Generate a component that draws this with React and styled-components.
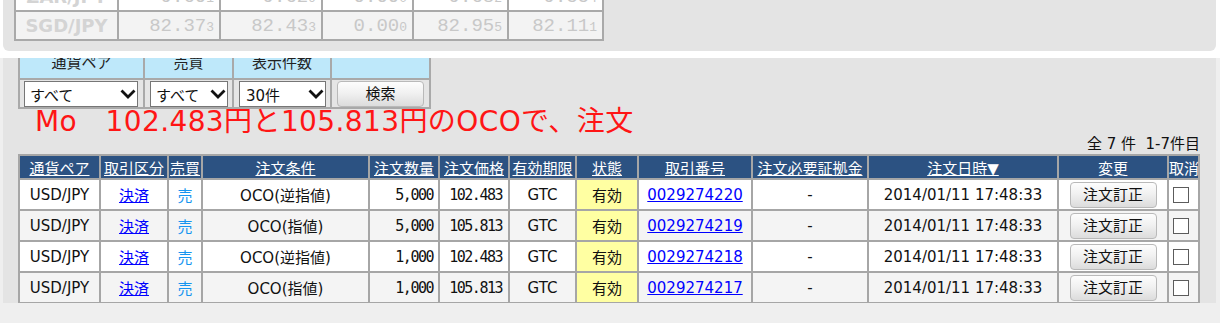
import React from "react";
import styled, { createGlobalStyle } from "styled-components";

const GlobalStyle = createGlobalStyle`
  * { box-sizing: border-box; }
  body {
    margin: 0;
    background: #fff;
    font-family: "DejaVu Sans", "Noto Sans CJK JP", sans-serif;
    color: #111;
  }
`;

const Page = styled.div`
  width: 1220px;
  height: 323px;
  overflow: hidden;
  background: #fff;
`;

// top rate board (scrolled so only the last row shows)
const RatePanel = styled.div`
  margin: 0 4px 0 3px;
  height: 51px;
  background: #e4e4e4;
  border-radius: 0 0 6px 6px;
  padding-left: 11px;
  overflow: hidden;
`;

const RateTable = styled.table`
  margin-top: -19px;
  border-spacing: 2px;
  background: #a9a9a9;
  table-layout: fixed;
  width: 588px;
`;

const RateRow = styled.tr`
  height: 27px;
  background: ${(p) => (p.$shade ? "#f3f3f3" : "#fff")};
`;

const PairCell = styled.td`
  padding: 0;
  text-align: center;
  font-weight: bold;
  font-size: 18px;
  color: #d4d4d4;
`;

const RateCell = styled.td`
  padding: 0 5px 0 0;
  text-align: right;
  font-family: "Liberation Mono", monospace;
  font-size: 19px;
  color: #c8c8c8;
  small {
    font-size: 13px;
  }
`;

const Frame = styled.div`
  margin-top: 7px;
  height: 265px;
  background: #efefef;
  padding: 0 4px 0 3px;
`;

const Panel = styled.div`
  height: 245px;
  background: #e4e4e4;
  overflow: hidden;
  padding-left: 15px;
`;

const Scroller = styled.div`
  margin-top: -6px;
`;

const FilterTable = styled.table`
  border-spacing: 2px;
  background: #a9a9a9;
  table-layout: fixed;
  width: 413px;
  font-size: 15px;
`;

const FilterHead = styled.th`
  height: 24px;
  padding: 1px 0 0;
  line-height: 16px;
  vertical-align: top;
  background: #bee8fa;
  font-weight: normal;
  color: #222;
`;

const FilterCell = styled.td`
  height: 27px;
  padding: 1px 0 0 ${(p) => p.$indent || 5}px;
  background: #e5e5e5;
  vertical-align: top;
`;

const SelectBox = styled.div`
  width: ${(p) => p.$w}px;
  height: 26px;
  background: #fff;
  border: 1px solid #767676;
  display: flex;
  align-items: center;
  justify-content: space-between;
  padding: 0 1px 0 ${(p) => p.$pad || 4}px;
  font-size: 15px;
  color: #111;
`;

const GradButton = styled.button`
  width: ${(p) => p.$w}px;
  height: 26px;
  padding: 0 0 4px;
  border: 1px solid #b9b9b9;
  border-radius: 4px;
  background: linear-gradient(#fdfdfd, #f1f1f1 45%, #dcdcdc);
  font-family: inherit;
  font-size: 15px;
  color: #111;
`;

const Message = styled.div`
  height: 26px;
  line-height: 26px;
  margin-left: 17px;
  font-size: 28px;
  letter-spacing: 0.4px;
  color: #ff1515;
  white-space: nowrap;
`;

const Count = styled.div`
  width: 1182px;
  height: 19px;
  line-height: 19px;
  text-align: right;
  font-size: 15px;
  color: #111;
`;

const OrderTable = styled.table`
  width: 1182px;
  table-layout: fixed;
  border-spacing: 2px;
  background: #a6a6a6;
  font-size: 15px;
`;

const Head = styled.th`
  height: 22px;
  padding: 0;
  background: #2c5282;
  color: #fff;
  font-weight: normal;
  white-space: nowrap;
  a {
    color: #fff;
    text-decoration: underline;
  }
`;

const Row = styled.tr`
  height: 29px;
  background: ${(p) => (p.$shade ? "#f4f4f4" : "#fff")};
`;

const Cell = styled.td`
  padding: 0;
  text-align: center;
  white-space: nowrap;
`;

const NumCell = styled.td`
  padding: 0 ${(p) => p.$pr}px 0 0;
  text-align: right;
  font-family: "DejaVu Sans Mono", monospace;
  font-size: 15px;
  letter-spacing: -1.5px;
`;

const StateCell = styled(Cell)`
  background: #ffffa2;
`;

const Link = styled.a`
  color: #0000ff;
  text-decoration: underline;
`;

const Side = styled.span`
  color: #1595f0;
`;

const CheckCell = styled.td`
  padding: 0 0 0 4px;
`;

const Check = styled.span`
  display: block;
  width: 16px;
  height: 16px;
  border: 1px solid #5c5c5c;
  background: #fff;
`;

const Chevron = () => (
  <svg width="16" height="10" viewBox="0 0 16 10">
    <path d="M1.5 1.5 L8 8 L14.5 1.5" fill="none" stroke="#111" strokeWidth="2.8" />
  </svg>
);

const rates = [
  { pair: "ZAR/JPY", v: [["9.60", "1"], ["9.62", "9"], ["0.00", "0"], ["9.68", "2"], ["9.55", "4"]] },
  { pair: "SGD/JPY", v: [["82.37", "3"], ["82.43", "3"], ["0.00", "0"], ["82.95", "5"], ["82.11", "1"]] },
];

const orders = [
  { cond: "OCO(逆指値)", qty: "5,000", price: "102.483", no: "0029274220" },
  { cond: "OCO(指値)", qty: "5,000", price: "105.813", no: "0029274219" },
  { cond: "OCO(逆指値)", qty: "1,000", price: "102.483", no: "0029274218" },
  { cond: "OCO(指値)", qty: "1,000", price: "105.813", no: "0029274217" },
];

const widths = [79, 66, 32, 165, 68, 68, 65, 60, 112, 114, 188, 108, 29];

export default function App() {
  return (
    <Page>
      <GlobalStyle />
      <RatePanel>
        <RateTable>
          <colgroup>
            {[101, 100, 100, 89, 93, 93].map((w, i) => (
              <col key={i} style={{ width: w }} />
            ))}
          </colgroup>
          <tbody>
            {rates.map((r, i) => (
              <RateRow key={r.pair} $shade={i === 1}>
                <PairCell>{r.pair}</PairCell>
                {r.v.map(([a, b], j) => (
                  <RateCell key={j}>
                    {a}
                    <small>{b}</small>
                  </RateCell>
                ))}
              </RateRow>
            ))}
          </tbody>
        </RateTable>
      </RatePanel>

      <Frame>
        <Panel>
          <Scroller>
            <FilterTable>
              <colgroup>
                <col style={{ width: 123 }} />
                <col style={{ width: 87 }} />
                <col style={{ width: 96 }} />
                <col style={{ width: 97 }} />
              </colgroup>
              <thead>
                <tr>
                  <FilterHead>通貨ペア</FilterHead>
                  <FilterHead>売買</FilterHead>
                  <FilterHead>表示件数</FilterHead>
                  <FilterHead />
                </tr>
              </thead>
              <tbody>
                <tr>
                  <FilterCell $indent={4}>
                    <SelectBox $w={114} $pad={5}>
                      すべて
                      <Chevron />
                    </SelectBox>
                  </FilterCell>
                  <FilterCell>
                    <SelectBox $w={78} $pad={5}>
                      すべて
                      <Chevron />
                    </SelectBox>
                  </FilterCell>
                  <FilterCell>
                    <SelectBox $w={87} $pad={6}>
                      30件
                      <Chevron />
                    </SelectBox>
                  </FilterCell>
                  <FilterCell>
                    <GradButton $w={87}>検索</GradButton>
                  </FilterCell>
                </tr>
              </tbody>
            </FilterTable>

            <Message>Mo　102.483円と105.813円のOCOで、注文</Message>
            <Count>全 7 件&nbsp;&nbsp;1-7件目</Count>

            <OrderTable>
              <colgroup>
                {widths.map((w, i) => (
                  <col key={i} style={{ width: w }} />
                ))}
              </colgroup>
              <thead>
                <tr>
                  <Head><a>通貨ペア</a></Head>
                  <Head><a>取引区分</a></Head>
                  <Head><a>売買</a></Head>
                  <Head><a>注文条件</a></Head>
                  <Head><a>注文数量</a></Head>
                  <Head><a>注文価格</a></Head>
                  <Head><a>有効期限</a></Head>
                  <Head><a>状態</a></Head>
                  <Head><a>取引番号</a></Head>
                  <Head><a>注文必要証拠金</a></Head>
                  <Head><a>注文日時▼</a></Head>
                  <Head>変更</Head>
                  <Head>取消</Head>
                </tr>
              </thead>
              <tbody>
                {orders.map((o, i) => (
                  <Row key={o.no} $shade={i % 2 === 1}>
                    <Cell>USD/JPY</Cell>
                    <Cell><Link>決済</Link></Cell>
                    <Cell><Side>売</Side></Cell>
                    <Cell>{o.cond}</Cell>
                    <NumCell $pr={5}>{o.qty}</NumCell>
                    <NumCell $pr={6}>{o.price}</NumCell>
                    <Cell>GTC</Cell>
                    <StateCell>有効</StateCell>
                    <Cell><Link>{o.no}</Link></Cell>
                    <Cell>-</Cell>
                    <Cell>2014/01/11 17:48:33</Cell>
                    <Cell>
                      <GradButton $w={87}>注文訂正</GradButton>
                    </Cell>
                    <CheckCell>
                      <Check />
                    </CheckCell>
                  </Row>
                ))}
              </tbody>
            </OrderTable>
          </Scroller>
        </Panel>
      </Frame>
    </Page>
  );
}
